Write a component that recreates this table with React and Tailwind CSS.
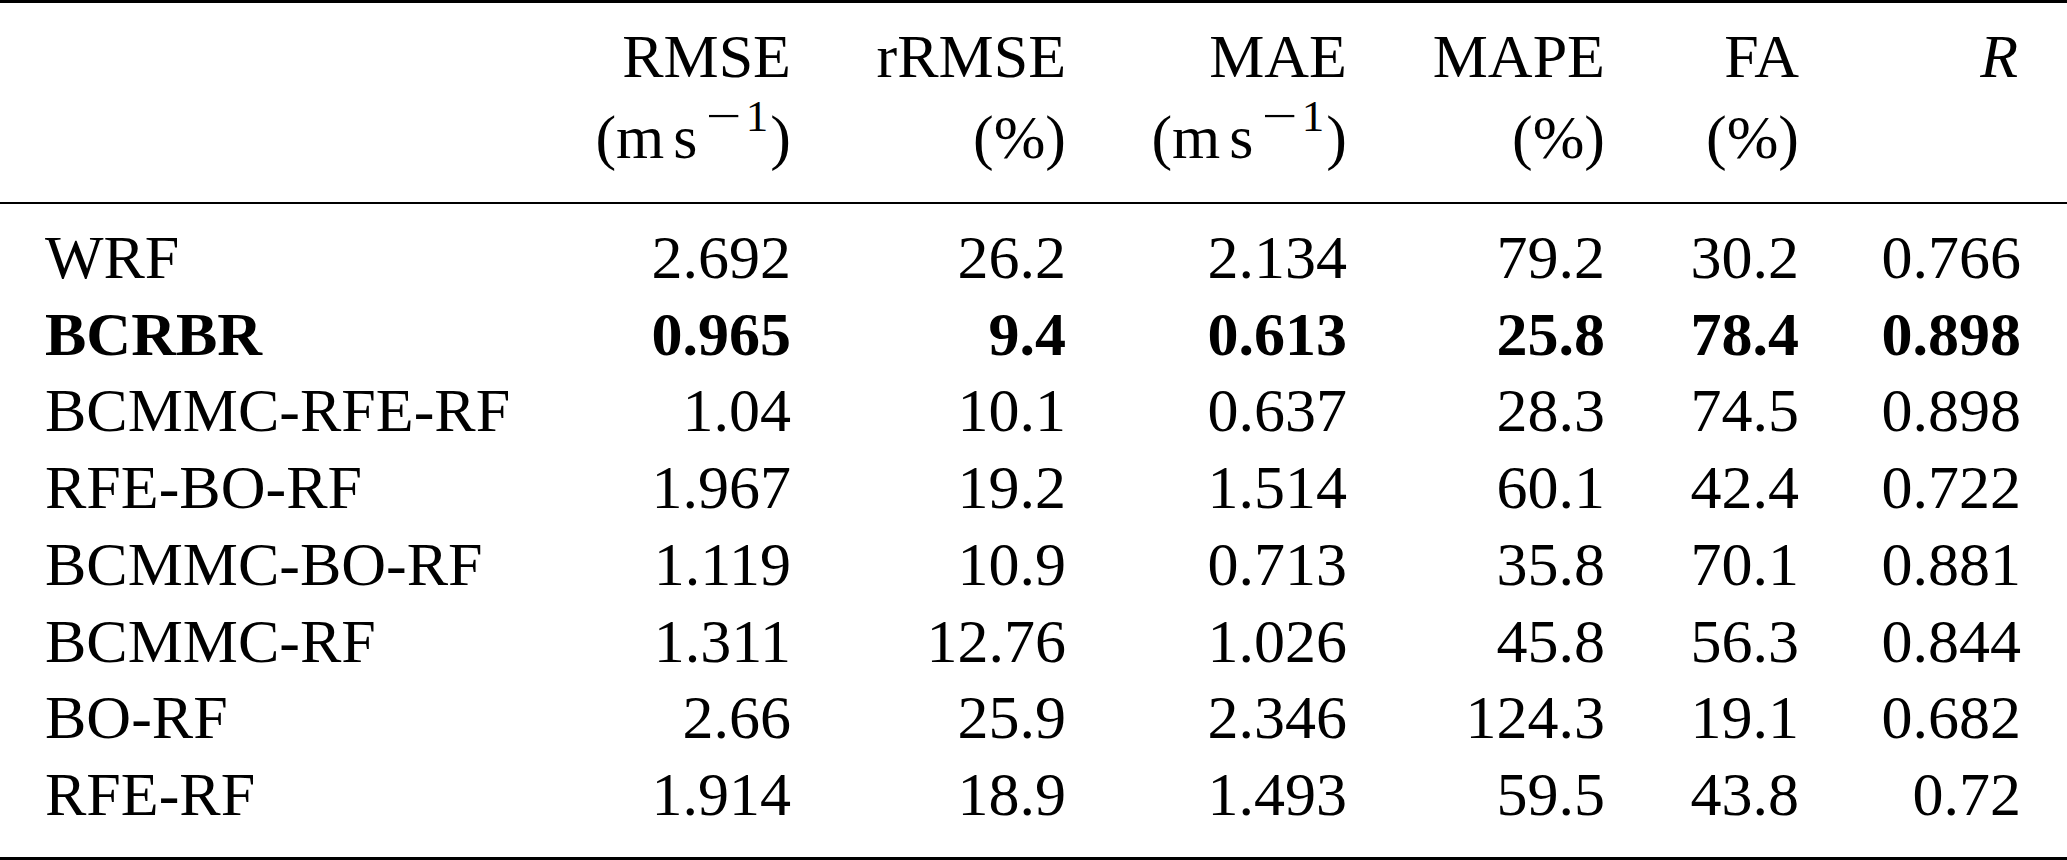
const rows = [
  ['WRF', '2.692', '26.2', '2.134', '79.2', '30.2', '0.766'],
  ['BCRBR', '0.965', '9.4', '0.613', '25.8', '78.4', '0.898', true],
  ['BCMMC-RFE-RF', '1.04', '10.1', '0.637', '28.3', '74.5', '0.898'],
  ['RFE-BO-RF', '1.967', '19.2', '1.514', '60.1', '42.4', '0.722'],
  ['BCMMC-BO-RF', '1.119', '10.9', '0.713', '35.8', '70.1', '0.881'],
  ['BCMMC-RF', '1.311', '12.76', '1.026', '45.8', '56.3', '0.844'],
  ['BO-RF', '2.66', '25.9', '2.346', '124.3', '19.1', '0.682'],
  ['RFE-RF', '1.914', '18.9', '1.493', '59.5', '43.8', '0.72'],
];

const cols = 'grid grid-cols-[550px_241px_275px_281px_258px_194px_222px_46px]';

// unit label (m s^-1), spaced like the LaTeX output
const Unit = () => (
  <span className="whitespace-nowrap">
    (m<span className="ml-[9px]">s</span>
    <span className="relative -top-[27px] text-[45px] leading-none">
      <span className="inline-block ml-[14px] mr-[9px] scale-x-[1.4]">−</span>1
    </span>
    <span className="ml-[2px]">)</span>
  </span>
);

const App = () => {
  return (
    <div
      className="w-[2067px] h-[860px] bg-white text-black text-[62px] overflow-hidden"
      style={{ fontFamily: '"Liberation Serif", "Times New Roman", serif' }}
    >
      <div className="border-t-[3px] border-black" />

      <div className="pt-[15px] pb-[27px] border-b-2 border-black">
        <div className={`${cols} leading-[76px] text-right`}>
          <div />
          <div>RMSE</div>
          <div>rRMSE</div>
          <div>MAE</div>
          <div>MAPE</div>
          <div>FA</div>
          <div className="italic pr-[3px]">R</div>
          <div />
        </div>
        <div className={`${cols} leading-[76px] text-right mt-[5px]`}>
          <div />
          <div><Unit /></div>
          <div>(%)</div>
          <div><Unit /></div>
          <div>(%)</div>
          <div>(%)</div>
          <div />
          <div />
        </div>
      </div>

      <div className="pt-[15px] pb-[24px] border-b-[3px] border-black">
        {rows.map(([name, ...vals]) => {
          const bold = vals.length > 6;
          return (
            <div key={name} className={`${cols} leading-[76.7px] ${bold ? 'font-bold' : ''}`}>
              <div className="pl-[45px] whitespace-nowrap">{name}</div>
              {vals.slice(0, 6).map((v, i) => (
                <div key={i} className="text-right">{v}</div>
              ))}
              <div />
            </div>
          );
        })}
      </div>
    </div>
  );
};

export default App;
